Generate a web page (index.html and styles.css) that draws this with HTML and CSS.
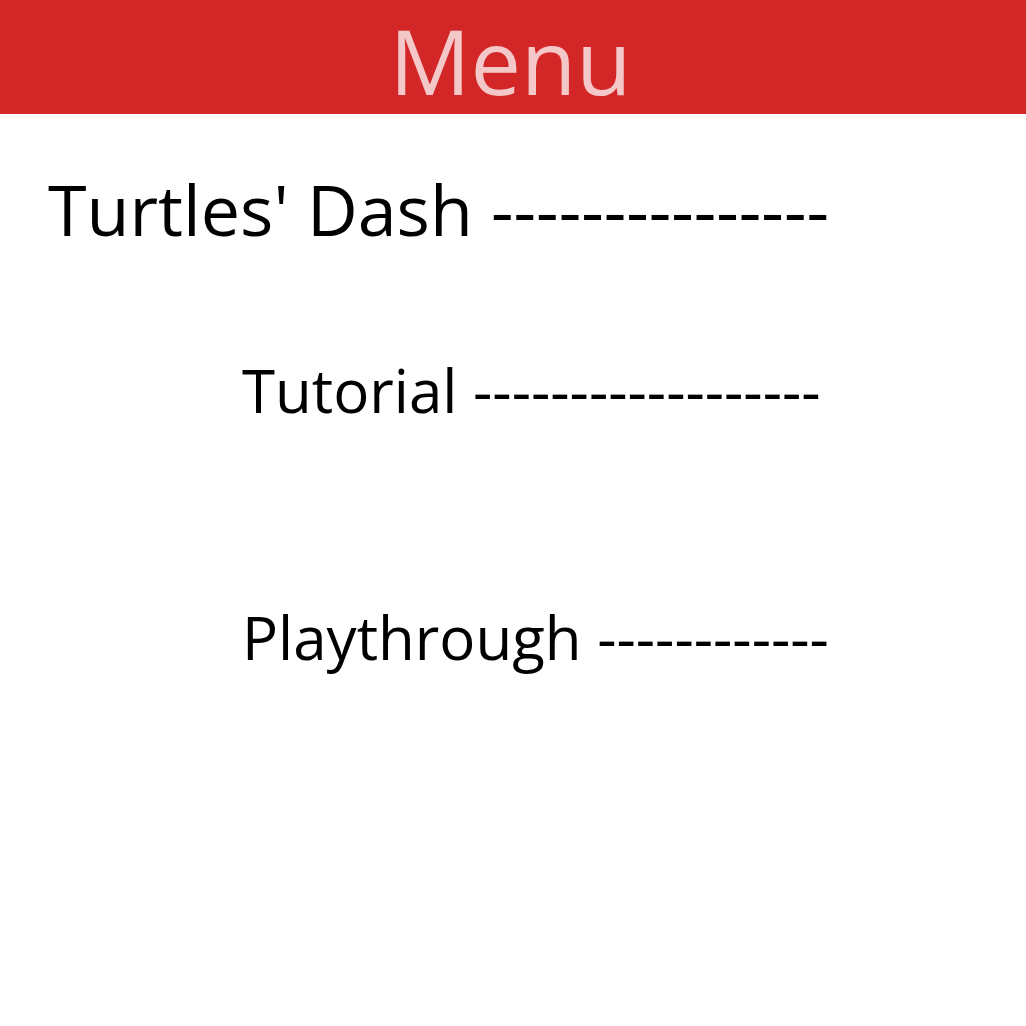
FILE: index.html
```html
<!DOCTYPE html>
<html lang="en">
<head>
<meta charset="utf-8">
<title>Menu</title>
<link rel="stylesheet" href="styles.css">
</head>
<body>
<header class="topbar">
  <h1 class="topbar-title">Menu</h1>
</header>
<main class="menu">
  <p class="game-title">Turtles' Dash ---------------</p>
  <ul class="options">
    <li class="option">Tutorial ------------------</li>
    <li class="option">Playthrough ------------</li>
  </ul>
</main>
</body>
</html>
```
FILE: styles.css
```css
* { box-sizing: border-box; }
html, body {
  margin: 0;
  padding: 0;
  background: #ffffff;
  font-family: "Open Sans", "Noto Sans", sans-serif;
  color: #000000;
}
.topbar {
  height: 114px;
  background: #d32627;
  display: flex;
  justify-content: center;
  padding-top: 6px;
  padding-right: 5px;
}
.topbar-title {
  margin: 0;
  font-size: 90px;
  font-weight: 400;
  line-height: 108px;
  color: rgba(255, 255, 255, 0.75);
}
.menu {
  padding: 47px 0 0 48px;
}
.game-title {
  margin: 0;
  font-size: 70px;
  line-height: normal;
}
.options {
  list-style: none;
  margin: 92px 0 0 0;
  padding: 0 0 0 194px;
  display: flex;
  flex-direction: column;
  gap: 165px;
}
.option {
  font-size: 60px;
  line-height: normal;
}
```
